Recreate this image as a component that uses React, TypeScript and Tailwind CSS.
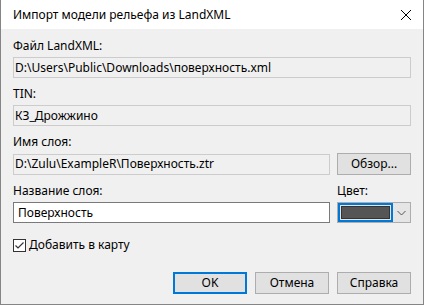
import { useState } from "react";

const font = { fontFamily: '"Noto Sans", "Segoe UI", sans-serif' };

function ReadOnlyBox({ value, className = "" }: { value: string; className?: string }) {
  return (
    <div
      className={`flex h-[21px] items-center border border-[#cccccc] bg-[#f0f0f0] pl-[1px] text-[12px] text-black ${className}`}
    >
      <span className="whitespace-nowrap">{value}</span>
    </div>
  );
}

function Button({
  label,
  focused = false,
}: {
  label: string;
  focused?: boolean;
}) {
  return (
    <button
      type="button"
      className={`flex h-[22px] w-[74px] items-center justify-center bg-[#e1e1e1] text-[12px] text-black ${
        focused
          ? "border-2 border-[#0078d7]"
          : "border border-[#adadad]"
      }`}
    >
      {label}
    </button>
  );
}

export default function App() {
  const [name, setName] = useState("Поверхность");
  const [addToMap, setAddToMap] = useState(true);

  return (
    <div
      style={font}
      className="flex h-[305px] w-[424px] flex-col border-x border-b border-[#858585] bg-[#f0f0f0] text-[12px] leading-[16px] text-black"
    >
      <div className="flex h-[29px] items-center justify-between bg-white pl-[12px] pr-[10px]">
        <span className="text-[12px]">Импорт модели рельефа из LandXML</span>
        <svg width="12" height="12" viewBox="0 0 12 12" className="mr-[1px]">
          <path d="M1 1 L11 11 M11 1 L1 11" stroke="#000" strokeWidth="1" />
        </svg>
      </div>

      <div className="flex flex-1 flex-col px-[12px]">
        <div className="mt-[9px] mb-[3px]">Файл LandXML:</div>
        <ReadOnlyBox value="D:\Users\Public\Downloads\поверхность.xml" />

        <div className="mt-[8px] mb-[3px]">TIN:</div>
        <ReadOnlyBox value="КЗ_Дрожжино" />

        <div className="mt-[8px] mb-[3px]">Имя слоя:</div>
        <div className="flex items-center gap-[7px]">
          <ReadOnlyBox
            value="D:\Zulu\ExampleR\Поверхность.ztr"
            className="flex-1"
          />
          <Button label="Обзор..." />
        </div>

        <div className="mt-[8px] flex gap-[7px]">
          <div className="flex flex-1 flex-col">
            <div className="mb-[3px]">Название слоя:</div>
            <input
              value={name}
              onChange={(e) => setName(e.target.value)}
              className="h-[21px] border border-[#7a7a7a] bg-white px-[4px] text-[12px] outline-none"
            />
          </div>
          <div className="flex w-[74px] flex-col">
            <div className="mb-[3px]">Цвет:</div>
            <div className="flex h-[21px] items-stretch border border-[#adadad] bg-[#e5e5e5]">
              <div className="flex flex-1 border-2 border-[#0078d7] p-[1px]">
                <div className="flex-1 border border-[#333333] bg-[#555555]" />
              </div>
              <div className="flex w-[17px] items-center justify-center">
                <svg width="9" height="6" viewBox="0 0 9 6">
                  <path d="M0.5 1 L4.5 5 L8.5 1" stroke="#555" strokeWidth="1" fill="none" />
                </svg>
              </div>
            </div>
          </div>
        </div>

        <label className="mt-[14px] flex items-center gap-[3px]">
          <button
            type="button"
            onClick={() => setAddToMap(!addToMap)}
            className="flex h-[13px] w-[13px] items-center justify-center border border-[#333333] bg-white"
          >
            {addToMap && (
              <svg width="11" height="11" viewBox="0 0 11 11">
                <path d="M1.5 5.5 L4 8 L9.5 2.5" stroke="#333" strokeWidth="1.2" fill="none" />
              </svg>
            )}
          </button>
          <span>Добавить в карту</span>
        </label>

        <div className="mt-auto mb-[10px] flex justify-end gap-[8px]">
          <Button label="OK" focused />
          <Button label="Отмена" />
          <Button label="Справка" />
        </div>
      </div>
    </div>
  );
}
